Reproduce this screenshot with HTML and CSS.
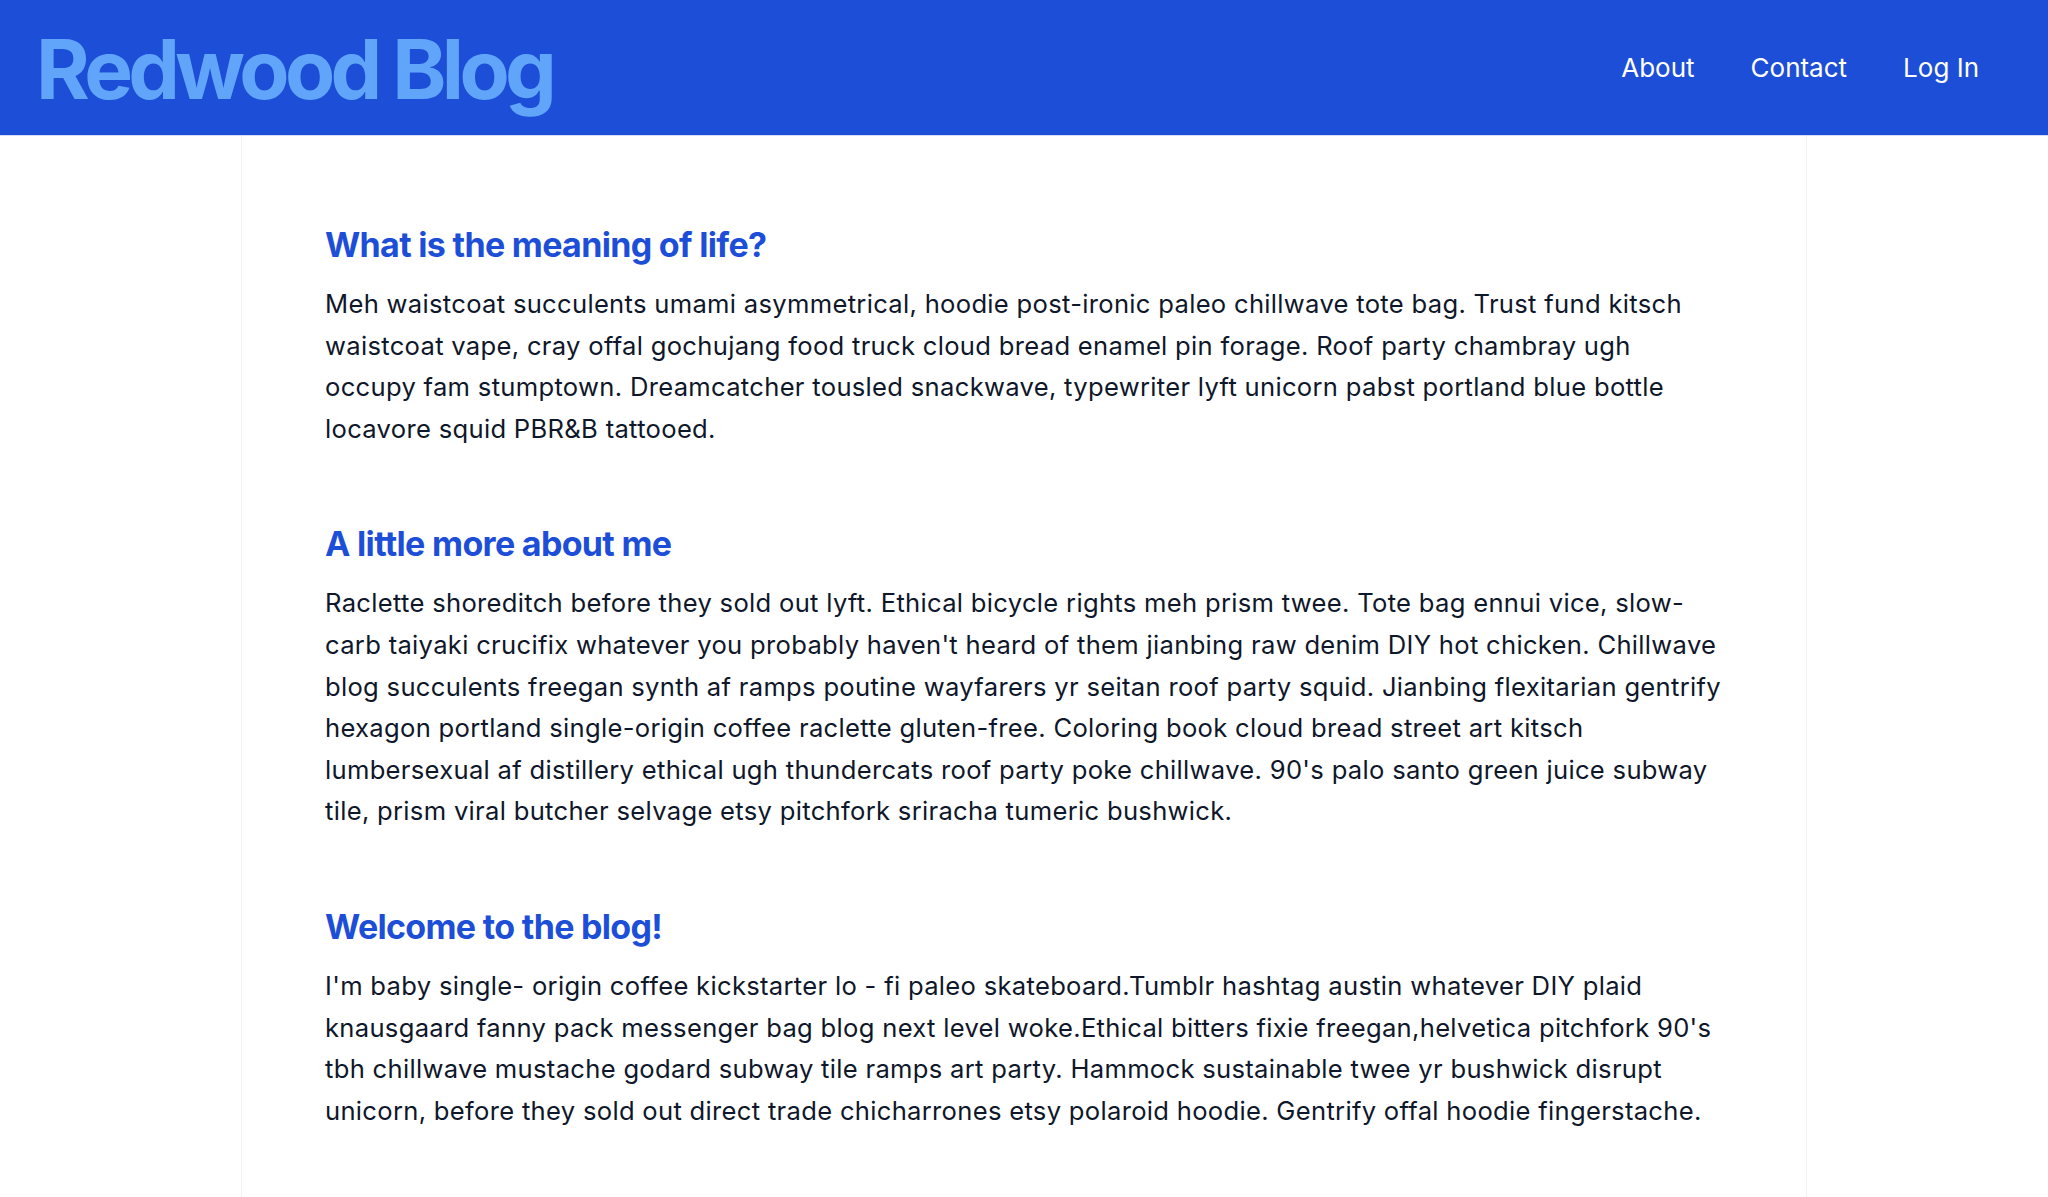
FILE: index.html
```html
<!DOCTYPE html>
<html lang="en">
<head>
  <meta charset="UTF-8">
  <meta name="viewport" content="width=device-width, initial-scale=1.0">
  <title>Redwood Blog</title>
  <link rel="stylesheet" href="styles.css">
</head>
<body>
  <header class="site-header">
    <h1 class="site-title"><a href="#">Redwood Blog</a></h1>
    <nav class="site-nav">
      <a href="#">About</a>
      <a href="#">Contact</a>
      <a href="#">Log In</a>
    </nav>
  </header>

  <main class="posts">
    <article class="post">
      <h2 class="post-title">What is the meaning of life?</h2>
      <p class="post-body">Meh waistcoat succulents umami asymmetrical, hoodie post-ironic paleo chillwave tote bag. Trust fund kitsch waistcoat vape, cray offal gochujang food truck cloud bread enamel pin forage. Roof party chambray ugh occupy fam stumptown. Dreamcatcher tousled snackwave, typewriter lyft unicorn pabst portland blue bottle locavore squid PBR&amp;B tattooed.</p>
    </article>
    <article class="post">
      <h2 class="post-title">A little more about me</h2>
      <p class="post-body">Raclette shoreditch before they sold out lyft. Ethical bicycle rights meh prism twee. Tote bag ennui vice, slow-carb taiyaki crucifix whatever you probably haven't heard of them jianbing raw denim DIY hot chicken. Chillwave blog succulents freegan synth af ramps poutine wayfarers yr seitan roof party squid. Jianbing flexitarian gentrify hexagon portland single-origin coffee raclette gluten-free. Coloring book cloud bread street art kitsch lumbersexual af distillery ethical ugh thundercats roof party poke chillwave. 90's palo santo green juice subway tile, prism viral butcher selvage etsy pitchfork sriracha tumeric bushwick.</p>
    </article>
    <article class="post">
      <h2 class="post-title">Welcome to the blog!</h2>
      <p class="post-body">I'm baby single- origin coffee kickstarter lo - fi paleo skateboard.Tumblr hashtag austin whatever DIY plaid knausgaard fanny pack messenger bag blog next level woke.Ethical bitters fixie freegan,helvetica pitchfork 90's tbh chillwave mustache godard subway tile ramps art party. Hammock sustainable twee yr bushwick disrupt unicorn, before they sold out direct trade chicharrones etsy polaroid hoodie. Gentrify offal hoodie fingerstache.</p>
    </article>
  </main>
</body>
</html>
```

FILE: styles.css
```css
body {
  margin: 0;
  min-height: 100vh;
  background: #fff;
  font-family: Inter, "Noto Sans", sans-serif;
  color: #0f172a;
  display: flex;
  flex-direction: column;
}
a {
  color: inherit;
  text-decoration: none;
}
.site-header {
  background: #1d4ed8;
  height: 136px;
  box-sizing: border-box;
  padding: 0 69px 0 36px;
  display: flex;
  align-items: center;
  justify-content: space-between;
  border-bottom: 1px solid #d5dcf5;
}
.site-title {
  margin: 0;
  color: #60a5fa;
  font-size: 82px;
  font-weight: 700;
  letter-spacing: -0.057em;
  line-height: 1;
  padding-top: 4px;
}
.site-nav {
  display: flex;
  gap: 56px;
}
.site-nav a {
  color: #fff;
  font-size: 26px;
  font-weight: 400;
}
.posts {
  flex: 1;
  width: 1566px;
  box-sizing: border-box;
  margin: 0 auto;
  padding: 86px 80px 86px 83px;
  border-left: 1px solid #f1f2f4;
  border-right: 1px solid #f1f2f4;
}
.post + .post {
  margin-top: 72px;
}
.post-title {
  margin: 0 0 15px;
  color: #1d4ed8;
  font-size: 34px;
  font-weight: 700;
  line-height: 46px;
  letter-spacing: -0.02em;
}
.post-body {
  margin: 0;
  font-size: 25.6px;
  line-height: 41.6px;
  letter-spacing: 0.3px;
}
```
